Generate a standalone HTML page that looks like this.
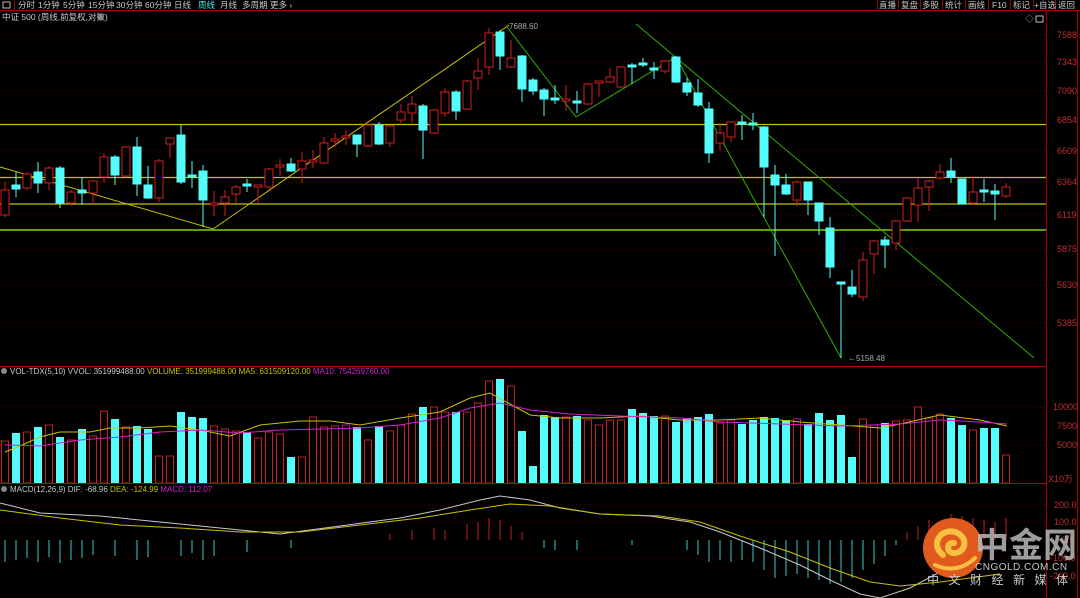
<!DOCTYPE html>
<html><head><meta charset="utf-8"><style>
body{margin:0;background:#000;width:1080px;height:598px;overflow:hidden;font-family:"Liberation Sans","Noto Sans CJK SC",sans-serif}
svg{display:block}
text{font-family:"Liberation Sans","Noto Sans CJK SC",sans-serif}
</style></head><body>
<svg width="1080" height="598" viewBox="0 0 1080 598" xmlns="http://www.w3.org/2000/svg">
<rect width="1080" height="598" fill="#000"/>
<!-- top toolbar -->
<line x1="0" y1="10.5" x2="1080" y2="10.5" stroke="#8a0a0a"/>
<line x1="14.5" y1="0" x2="14.5" y2="10" stroke="#8a0a0a"/>
<rect x="3" y="2" width="7" height="6" fill="none" stroke="#bbb"/>
<g font-size="8.5" fill="#c8c8c8">
<text x="18" y="8">分时</text><text x="38" y="8">1分钟</text><text x="63" y="8">5分钟</text><text x="88" y="8">15分钟</text><text x="116" y="8">30分钟</text><text x="145" y="8">60分钟</text><text x="174" y="8">日线</text><text x="198" y="8" fill="#4ee">周线</text><text x="220" y="8">月线</text><text x="242" y="8">多周期</text><text x="270" y="8">更多 ›</text>
</g>
<g stroke="#8a0a0a"><line x1="877.5" y1="0" x2="877.5" y2="10"/><line x1="898.5" y1="0" x2="898.5" y2="10"/><line x1="920.5" y1="0" x2="920.5" y2="10"/><line x1="942.5" y1="0" x2="942.5" y2="10"/><line x1="965.5" y1="0" x2="965.5" y2="10"/><line x1="988.5" y1="0" x2="988.5" y2="10"/><line x1="1010.5" y1="0" x2="1010.5" y2="10"/><line x1="1033.5" y1="0" x2="1033.5" y2="10"/><line x1="1055.5" y1="0" x2="1055.5" y2="10"/></g>
<g font-size="8.5" fill="#c8c8c8"><text x="879" y="8">直播</text><text x="901" y="8">复盘</text><text x="922" y="8">多股</text><text x="945" y="8">统计</text><text x="968" y="8">画线</text><text x="992" y="8">F10</text><text x="1013" y="8">标记</text><text x="1034" y="8">+自选</text><text x="1058" y="8">返回</text></g>
<text x="2" y="20" font-size="8.5" fill="#c8c8c8">中证 500 (周线,前复权,对数)</text>
<circle cx="100" cy="17" r="3" fill="#888"/>
<!-- right axis -->
<line x1="1046.5" y1="11" x2="1046.5" y2="598" stroke="#a00"/>
<line x1="1077.5" y1="11" x2="1077.5" y2="598" stroke="#a00"/>
<text x="1025" y="22" font-size="9" fill="#999">◇</text><rect x="1036" y="16" width="7" height="6" fill="none" stroke="#bbb"/>
<g stroke="#6a0000" stroke-dasharray="1,3">
<line x1="0" y1="35" x2="1046" y2="35"/><line x1="0" y1="62" x2="1046" y2="62"/><line x1="0" y1="91" x2="1046" y2="91"/><line x1="0" y1="120" x2="1046" y2="120"/><line x1="0" y1="151" x2="1046" y2="151"/><line x1="0" y1="182" x2="1046" y2="182"/><line x1="0" y1="215" x2="1046" y2="215"/><line x1="0" y1="249" x2="1046" y2="249"/><line x1="0" y1="285" x2="1046" y2="285"/><line x1="0" y1="323" x2="1046" y2="323"/>
<line x1="0" y1="407" x2="1046" y2="407"/><line x1="0" y1="445" x2="1046" y2="445"/>
<line x1="0" y1="505" x2="1046" y2="505"/><line x1="0" y1="522" x2="1046" y2="522"/><line x1="0" y1="558" x2="1046" y2="558"/><line x1="0" y1="576" x2="1046" y2="576"/>
</g>
<g font-size="9" fill="#c03030">
<text x="1057" y="38">7588</text><text x="1057" y="65">7343</text><text x="1057" y="94">7090</text><text x="1057" y="123">6854</text><text x="1057" y="154">6609</text><text x="1057" y="185">6364</text><text x="1057" y="218">6119</text><text x="1057" y="252">5875</text><text x="1057" y="288">5630</text><text x="1057" y="326">5385</text>
<text x="1053" y="410">10000</text><text x="1057" y="429">7500</text><text x="1057" y="448">5000</text><text x="1048" y="482">X10万</text>
<text x="1054" y="508">200.0</text><text x="1054" y="525">100.0</text><text x="1062" y="543">0.0</text><text x="1050" y="561">-100.0</text><text x="1050" y="579">-200.0</text>
</g>
<!-- horizontal lines -->
<g stroke="#c8c000" stroke-width="1.2"><line x1="0" y1="124.5" x2="1046" y2="124.5"/><line x1="0" y1="177.5" x2="1046" y2="177.5"/><line x1="0" y1="204" x2="1046" y2="204"/></g>
<line x1="0" y1="230" x2="1046" y2="230" stroke="#5aa000" stroke-width="2"/>
<!-- trend lines -->
<polyline points="0,167 213,229 509,25" fill="none" stroke="#c8c000"/>
<polyline points="507,27 576,117 676,57 841,358" fill="none" stroke="#30b000"/>
<line x1="636" y1="24" x2="1034" y2="358" stroke="#30b000"/>
<text x="509" y="29" font-size="8" fill="#aaa">7688.60</text>
<text x="848" y="361" font-size="8" fill="#aaa">←5158.48</text>
<!-- candles -->
<g id="c" stroke-width="1"></g>
<g stroke="#d02020" fill="#000">
<line x1="5" y1="182" x2="5" y2="217"/><rect x="1" y="190" width="8" height="25"/>
<line x1="27" y1="172" x2="27" y2="190"/><rect x="23" y="174" width="8" height="14"/>
<line x1="49" y1="166" x2="49" y2="190"/><rect x="45" y="168" width="8" height="15"/>
<line x1="71" y1="190" x2="71" y2="206"/><rect x="67" y="192" width="8" height="11"/>
<line x1="93" y1="180" x2="93" y2="204"/><rect x="89" y="181" width="8" height="12"/>
<line x1="104" y1="153" x2="104" y2="183"/><rect x="100" y="157" width="8" height="20"/>
<line x1="126" y1="146" x2="126" y2="177"/><rect x="122" y="147" width="8" height="29"/>
<line x1="159" y1="159" x2="159" y2="202"/><rect x="155" y="161" width="8" height="37"/>
<line x1="170" y1="138" x2="170" y2="158"/><rect x="166" y="138" width="8" height="6"/>
<line x1="214" y1="191" x2="214" y2="216"/><rect x="210" y="203" width="8" height="2"/>
<line x1="225" y1="190" x2="225" y2="216"/><rect x="221" y="197" width="8" height="6"/>
<line x1="236" y1="185" x2="236" y2="203"/><rect x="232" y="187" width="8" height="7"/>
<line x1="258" y1="185" x2="258" y2="203"/><rect x="254" y="185" width="8" height="2"/>
<line x1="269" y1="168" x2="269" y2="189"/><rect x="265" y="169" width="8" height="18"/>
<line x1="280" y1="159" x2="280" y2="176"/><rect x="276" y="165" width="8" height="2"/>
<line x1="302" y1="152" x2="302" y2="183"/><rect x="298" y="161" width="8" height="8"/>
<line x1="313" y1="150" x2="313" y2="168"/><rect x="309" y="160" width="8" height="2"/>
<line x1="324" y1="137" x2="324" y2="164"/><rect x="320" y="143" width="8" height="20"/>
<line x1="335" y1="133" x2="335" y2="147"/><rect x="331" y="139" width="8" height="2"/>
<line x1="346" y1="130" x2="346" y2="145"/><rect x="342" y="136" width="8" height="2"/>
<line x1="368" y1="124" x2="368" y2="147"/><rect x="364" y="125" width="8" height="21"/>
<line x1="390" y1="125" x2="390" y2="147"/><rect x="386" y="126" width="8" height="17"/>
<line x1="401" y1="104" x2="401" y2="123"/><rect x="397" y="112" width="8" height="8"/>
<line x1="412" y1="96" x2="412" y2="123"/><rect x="408" y="104" width="8" height="9"/>
<line x1="434" y1="109" x2="434" y2="134"/><rect x="430" y="110" width="8" height="23"/>
<line x1="445" y1="88" x2="445" y2="117"/><rect x="441" y="92" width="8" height="21"/>
<line x1="467" y1="80" x2="467" y2="110"/><rect x="463" y="81" width="8" height="28"/>
<line x1="478" y1="58" x2="478" y2="90"/><rect x="474" y="71" width="8" height="7"/>
<line x1="489" y1="28" x2="489" y2="75"/><rect x="485" y="33" width="8" height="34"/>
<line x1="511" y1="40" x2="511" y2="68"/><rect x="507" y="58" width="8" height="9"/>
<line x1="566" y1="85" x2="566" y2="111"/><rect x="562" y="99" width="8" height="2"/>
<line x1="588" y1="83" x2="588" y2="105"/><rect x="584" y="84" width="8" height="20"/>
<line x1="599" y1="81" x2="599" y2="97"/><rect x="595" y="81" width="8" height="2"/>
<line x1="610" y1="68" x2="610" y2="83"/><rect x="606" y="77" width="8" height="5"/>
<line x1="621" y1="66" x2="621" y2="88"/><rect x="617" y="67" width="8" height="20"/>
<line x1="665" y1="60" x2="665" y2="74"/><rect x="661" y="61" width="8" height="10"/>
<line x1="720" y1="123" x2="720" y2="151"/><rect x="716" y="133" width="8" height="10"/>
<line x1="731" y1="121" x2="731" y2="142"/><rect x="727" y="122" width="8" height="15"/>
<line x1="797" y1="180" x2="797" y2="206"/><rect x="793" y="182" width="8" height="18"/>
<line x1="863" y1="252" x2="863" y2="301"/><rect x="859" y="260" width="8" height="37"/>
<line x1="874" y1="240" x2="874" y2="274"/><rect x="870" y="241" width="8" height="13"/>
<line x1="896" y1="220" x2="896" y2="250"/><rect x="892" y="221" width="8" height="22"/>
<line x1="907" y1="197" x2="907" y2="222"/><rect x="903" y="198" width="8" height="23"/>
<line x1="918" y1="178" x2="918" y2="222"/><rect x="914" y="188" width="8" height="17"/>
<line x1="929" y1="180" x2="929" y2="211"/><rect x="925" y="181" width="8" height="6"/>
<line x1="940" y1="164" x2="940" y2="180"/><rect x="936" y="172" width="8" height="6"/>
<line x1="973" y1="176" x2="973" y2="205"/><rect x="969" y="192" width="8" height="11"/>
<line x1="1006" y1="183" x2="1006" y2="198"/><rect x="1002" y="187" width="8" height="9"/>
</g>
<g stroke="#54fcfc" fill="#54fcfc">
<line x1="16" y1="172" x2="16" y2="197"/><rect x="12" y="185" width="8" height="4"/>
<line x1="38" y1="162" x2="38" y2="193"/><rect x="34" y="172" width="8" height="11"/>
<line x1="60" y1="166" x2="60" y2="208"/><rect x="56" y="168" width="8" height="35"/>
<line x1="82" y1="177" x2="82" y2="205"/><rect x="78" y="190" width="8" height="3"/>
<line x1="115" y1="155" x2="115" y2="185"/><rect x="111" y="157" width="8" height="18"/>
<line x1="137" y1="137" x2="137" y2="196"/><rect x="133" y="147" width="8" height="37"/>
<line x1="148" y1="166" x2="148" y2="199"/><rect x="144" y="185" width="8" height="13"/>
<line x1="181" y1="125" x2="181" y2="184"/><rect x="177" y="135" width="8" height="47"/>
<line x1="192" y1="161" x2="192" y2="188"/><rect x="188" y="175" width="8" height="2"/>
<line x1="203" y1="165" x2="203" y2="227"/><rect x="199" y="171" width="8" height="29"/>
<line x1="247" y1="179" x2="247" y2="192"/><rect x="243" y="184" width="8" height="2"/>
<line x1="291" y1="158" x2="291" y2="172"/><rect x="287" y="164" width="8" height="7"/>
<line x1="357" y1="135" x2="357" y2="157"/><rect x="353" y="135" width="8" height="9"/>
<line x1="379" y1="122" x2="379" y2="145"/><rect x="375" y="125" width="8" height="19"/>
<line x1="423" y1="104" x2="423" y2="159"/><rect x="419" y="106" width="8" height="24"/>
<line x1="456" y1="90" x2="456" y2="120"/><rect x="452" y="92" width="8" height="19"/>
<line x1="500" y1="30" x2="500" y2="70"/><rect x="496" y="32" width="8" height="24"/>
<line x1="522" y1="55" x2="522" y2="102"/><rect x="518" y="56" width="8" height="33"/>
<line x1="533" y1="78" x2="533" y2="95"/><rect x="529" y="80" width="8" height="11"/>
<line x1="544" y1="88" x2="544" y2="116"/><rect x="540" y="90" width="8" height="9"/>
<line x1="555" y1="85" x2="555" y2="104"/><rect x="551" y="98" width="8" height="2"/>
<line x1="577" y1="91" x2="577" y2="113"/><rect x="573" y="101" width="8" height="2"/>
<line x1="632" y1="63" x2="632" y2="84"/><rect x="628" y="65" width="8" height="2"/>
<line x1="643" y1="58" x2="643" y2="67"/><rect x="639" y="63" width="8" height="2"/>
<line x1="654" y1="62" x2="654" y2="79"/><rect x="650" y="68" width="8" height="2"/>
<line x1="676" y1="56" x2="676" y2="83"/><rect x="672" y="57" width="8" height="25"/>
<line x1="687" y1="78" x2="687" y2="96"/><rect x="683" y="83" width="8" height="9"/>
<line x1="698" y1="79" x2="698" y2="107"/><rect x="694" y="93" width="8" height="12"/>
<line x1="709" y1="102" x2="709" y2="163"/><rect x="705" y="109" width="8" height="44"/>
<line x1="742" y1="115" x2="742" y2="140"/><rect x="738" y="122" width="8" height="2"/>
<line x1="753" y1="113" x2="753" y2="130"/><rect x="749" y="123" width="8" height="2"/>
<line x1="764" y1="126" x2="764" y2="217"/><rect x="760" y="127" width="8" height="40"/>
<line x1="775" y1="165" x2="775" y2="256"/><rect x="771" y="175" width="8" height="10"/>
<line x1="786" y1="174" x2="786" y2="195"/><rect x="782" y="185" width="8" height="9"/>
<line x1="808" y1="182" x2="808" y2="215"/><rect x="804" y="182" width="8" height="18"/>
<line x1="819" y1="203" x2="819" y2="235"/><rect x="815" y="203" width="8" height="18"/>
<line x1="830" y1="217" x2="830" y2="278"/><rect x="826" y="228" width="8" height="39"/>
<line x1="841" y1="282" x2="841" y2="358"/><rect x="837" y="282" width="8" height="2"/>
<line x1="852" y1="270" x2="852" y2="297"/><rect x="848" y="287" width="8" height="7"/>
<line x1="885" y1="236" x2="885" y2="268"/><rect x="881" y="240" width="8" height="5"/>
<line x1="951" y1="158" x2="951" y2="183"/><rect x="947" y="171" width="8" height="6"/>
<line x1="962" y1="179" x2="962" y2="204"/><rect x="958" y="179" width="8" height="25"/>
<line x1="984" y1="179" x2="984" y2="202"/><rect x="980" y="190" width="8" height="2"/>
<line x1="995" y1="184" x2="995" y2="220"/><rect x="991" y="191" width="8" height="3"/>
</g>
<!-- volume panel -->
<line x1="0" y1="366.5" x2="1046" y2="366.5" stroke="#a00"/>
<circle cx="4" cy="371" r="3" fill="#888"/>
<text x="10" y="374" font-size="8" fill="#c8c8c8">VOL-TDX(5,10) VVOL: 351999488.00 <tspan fill="#c8c000">VOLUME: 351999488.00  MA5: 631509120.00</tspan> <tspan fill="#d020d0">MA10: 754269760.00</tspan></text>
<g stroke="#c02020" fill="none">
<rect x="1.5" y="441" width="7" height="42"/><rect x="23.5" y="432" width="7" height="51"/><rect x="45.5" y="425" width="7" height="58"/><rect x="67.5" y="440" width="7" height="43"/><rect x="89.5" y="436" width="7" height="47"/><rect x="100.5" y="411" width="7" height="72"/><rect x="122.5" y="427" width="7" height="56"/><rect x="155.5" y="456" width="7" height="27"/><rect x="166.5" y="456" width="7" height="27"/><rect x="210.5" y="426" width="7" height="57"/><rect x="221.5" y="429" width="7" height="54"/><rect x="232.5" y="431" width="7" height="52"/><rect x="254.5" y="438" width="7" height="45"/><rect x="265.5" y="432" width="7" height="51"/><rect x="276.5" y="434" width="7" height="49"/><rect x="298.5" y="457" width="7" height="26"/><rect x="309.5" y="417" width="7" height="66"/><rect x="320.5" y="427" width="7" height="56"/><rect x="331.5" y="426" width="7" height="57"/><rect x="342.5" y="425" width="7" height="58"/><rect x="364.5" y="440" width="7" height="43"/><rect x="386.5" y="431" width="7" height="52"/><rect x="397.5" y="425" width="7" height="58"/><rect x="408.5" y="414" width="7" height="69"/><rect x="430.5" y="407" width="7" height="76"/><rect x="441.5" y="412" width="7" height="71"/><rect x="463.5" y="412" width="7" height="71"/><rect x="474.5" y="403" width="7" height="80"/><rect x="485.5" y="381" width="7" height="102"/><rect x="507.5" y="386" width="7" height="97"/><rect x="562.5" y="417" width="7" height="66"/><rect x="584.5" y="420" width="7" height="63"/><rect x="595.5" y="425" width="7" height="58"/><rect x="606.5" y="420" width="7" height="63"/><rect x="617.5" y="420" width="7" height="63"/><rect x="661.5" y="416" width="7" height="67"/><rect x="716.5" y="423" width="7" height="60"/><rect x="727.5" y="420" width="7" height="63"/><rect x="793.5" y="419" width="7" height="64"/><rect x="859.5" y="419" width="7" height="64"/><rect x="870.5" y="425" width="7" height="58"/><rect x="892.5" y="421" width="7" height="62"/><rect x="903.5" y="420" width="7" height="63"/><rect x="914.5" y="407" width="7" height="76"/><rect x="925.5" y="418" width="7" height="65"/><rect x="936.5" y="414" width="7" height="69"/><rect x="969.5" y="430" width="7" height="53"/><rect x="1002.5" y="455" width="7" height="28"/>
</g>
<g fill="#54fcfc">
<rect x="12" y="433" width="8" height="50"/><rect x="34" y="427" width="8" height="56"/><rect x="56" y="437" width="8" height="46"/><rect x="78" y="429" width="8" height="54"/><rect x="111" y="419" width="8" height="64"/><rect x="133" y="426" width="8" height="57"/><rect x="144" y="429" width="8" height="54"/><rect x="177" y="412" width="8" height="71"/><rect x="188" y="417" width="8" height="66"/><rect x="199" y="418" width="8" height="65"/><rect x="243" y="432" width="8" height="51"/><rect x="287" y="457" width="8" height="26"/><rect x="353" y="427" width="8" height="56"/><rect x="375" y="426" width="8" height="57"/><rect x="419" y="407" width="8" height="76"/><rect x="452" y="412" width="8" height="71"/><rect x="496" y="379" width="8" height="104"/><rect x="518" y="431" width="8" height="52"/><rect x="529" y="466" width="8" height="17"/><rect x="540" y="415" width="8" height="68"/><rect x="551" y="417" width="8" height="66"/><rect x="573" y="416" width="8" height="67"/><rect x="628" y="409" width="8" height="74"/><rect x="639" y="413" width="8" height="70"/><rect x="650" y="416" width="8" height="67"/><rect x="672" y="422" width="8" height="61"/><rect x="683" y="418" width="8" height="65"/><rect x="694" y="417" width="8" height="66"/><rect x="705" y="414" width="8" height="69"/><rect x="738" y="424" width="8" height="59"/><rect x="749" y="420" width="8" height="63"/><rect x="760" y="417" width="8" height="66"/><rect x="771" y="418" width="8" height="65"/><rect x="782" y="420" width="8" height="63"/><rect x="804" y="424" width="8" height="59"/><rect x="815" y="413" width="8" height="70"/><rect x="826" y="420" width="8" height="63"/><rect x="837" y="415" width="8" height="68"/><rect x="848" y="457" width="8" height="26"/><rect x="881" y="423" width="8" height="60"/><rect x="947" y="418" width="8" height="65"/><rect x="958" y="425" width="8" height="58"/><rect x="980" y="428" width="8" height="55"/><rect x="991" y="428" width="8" height="55"/>
</g>
<polyline fill="none" stroke="#c8c000" points="5,452 20,446 40,437 60,432 90,432 110,428 140,428 170,426 200,430 230,436 260,425 300,421 330,421 360,425 400,418 440,412 470,398 490,393 510,404 530,415 560,418 600,418 640,416 680,420 720,420 760,418 800,422 840,425 880,428 900,424 940,415 980,420 1007,426"/>
<polyline fill="none" stroke="#d020d0" points="5,445 40,446 80,440 120,437 160,432 200,430 240,433 280,430 320,429 360,428 400,425 440,418 470,408 500,403 530,410 570,414 620,416 680,418 720,422 780,424 840,426 900,424 940,420 980,422 1007,424"/>
<!-- macd panel -->
<line x1="0" y1="483.5" x2="1046" y2="483.5" stroke="#a00"/>
<circle cx="4" cy="489" r="3" fill="#888"/>
<text x="10" y="492" font-size="8" fill="#c8c8c8">MACD(12,26,9) DIF: -68.96 <tspan fill="#c8c000">DEA: -124.99</tspan> <tspan fill="#d020d0">MACD: 112.07</tspan></text>
<g stroke="#3cc8c8">
<line x1="5" y1="540" x2="5" y2="562"/><line x1="16" y1="540" x2="16" y2="560"/><line x1="27" y1="540" x2="27" y2="558"/><line x1="38" y1="540" x2="38" y2="562"/><line x1="49" y1="540" x2="49" y2="557"/><line x1="60" y1="540" x2="60" y2="563"/><line x1="71" y1="540" x2="71" y2="560"/><line x1="82" y1="540" x2="82" y2="558"/><line x1="93" y1="540" x2="93" y2="555"/><line x1="115" y1="540" x2="115" y2="556"/><line x1="137" y1="540" x2="137" y2="560"/><line x1="148" y1="540" x2="148" y2="557"/><line x1="181" y1="540" x2="181" y2="556"/><line x1="192" y1="540" x2="192" y2="553"/><line x1="203" y1="540" x2="203" y2="560"/><line x1="214" y1="540" x2="214" y2="556"/><line x1="247" y1="540" x2="247" y2="552"/><line x1="291" y1="540" x2="291" y2="548"/>
<line x1="544" y1="540" x2="544" y2="548"/><line x1="555" y1="540" x2="555" y2="550"/><line x1="577" y1="540" x2="577" y2="550"/><line x1="632" y1="540" x2="632" y2="545"/><line x1="687" y1="540" x2="687" y2="550"/><line x1="698" y1="540" x2="698" y2="555"/><line x1="709" y1="540" x2="709" y2="562"/><line x1="720" y1="540" x2="720" y2="560"/><line x1="731" y1="540" x2="731" y2="562"/><line x1="742" y1="540" x2="742" y2="560"/><line x1="753" y1="540" x2="753" y2="562"/><line x1="764" y1="540" x2="764" y2="570"/><line x1="775" y1="540" x2="775" y2="578"/><line x1="786" y1="540" x2="786" y2="576"/><line x1="797" y1="540" x2="797" y2="574"/><line x1="808" y1="540" x2="808" y2="578"/><line x1="819" y1="540" x2="819" y2="580"/><line x1="830" y1="540" x2="830" y2="584"/><line x1="841" y1="540" x2="841" y2="582"/><line x1="852" y1="540" x2="852" y2="578"/><line x1="863" y1="540" x2="863" y2="570"/><line x1="874" y1="540" x2="874" y2="564"/><line x1="885" y1="540" x2="885" y2="556"/><line x1="896" y1="540" x2="896" y2="545"/><line x1="940" y1="540" x2="940" y2="545"/>
</g>
<g stroke="#c02020">
<line x1="390" y1="540" x2="390" y2="534"/><line x1="412" y1="540" x2="412" y2="530"/><line x1="434" y1="540" x2="434" y2="528"/><line x1="445" y1="540" x2="445" y2="530"/><line x1="467" y1="540" x2="467" y2="524"/><line x1="478" y1="540" x2="478" y2="522"/><line x1="489" y1="540" x2="489" y2="518"/><line x1="500" y1="540" x2="500" y2="520"/><line x1="511" y1="540" x2="511" y2="526"/><line x1="522" y1="540" x2="522" y2="532"/>
<line x1="907" y1="540" x2="907" y2="532"/><line x1="918" y1="540" x2="918" y2="526"/><line x1="929" y1="540" x2="929" y2="520"/><line x1="951" y1="540" x2="951" y2="514"/><line x1="962" y1="540" x2="962" y2="516"/><line x1="973" y1="540" x2="973" y2="518"/><line x1="984" y1="540" x2="984" y2="520"/><line x1="995" y1="540" x2="995" y2="522"/><line x1="1006" y1="540" x2="1006" y2="518"/>
</g>
<polyline fill="none" stroke="#c8c8c8" points="0,503 40,513 100,516 160,522 220,528 280,534 340,526 400,518 440,510 480,500 500,496 530,500 560,508 600,514 650,516 690,522 720,532 760,548 800,565 830,580 860,594 880,598 910,588 940,572"/>
<polyline fill="none" stroke="#c8c000" points="0,510 60,518 120,525 180,528 240,532 300,532 360,525 420,518 470,510 510,504 550,506 600,514 660,516 700,522 740,536 790,552 830,568 870,582 900,586 940,582 1000,574"/>
<!-- logo -->
<circle cx="953" cy="548" r="30" fill="#e05a1e"/>
<path d="M943,555 C930,545 940,528 955,532 C968,536 967,552 955,553 C946,554 946,542 954,543" fill="none" stroke="#f8c040" stroke-width="6" stroke-linecap="round"/>
<path d="M935,565 C950,572 965,568 975,558" fill="none" stroke="#f8c040" stroke-width="4" stroke-linecap="round"/>
<text x="975" y="557" font-size="34" font-weight="bold" fill="#b8b8b8" fill-opacity="0.85" font-family="Noto Sans CJK SC, sans-serif">中金网</text>
<text x="975" y="570" font-size="10" fill="#c8c8c8" letter-spacing="0.5">CNGOLD.COM.CN</text>
<text x="927" y="584" font-size="12" fill="#c8c8c8" letter-spacing="9.5">中文财经新媒体</text>
</svg>
</body></html>
